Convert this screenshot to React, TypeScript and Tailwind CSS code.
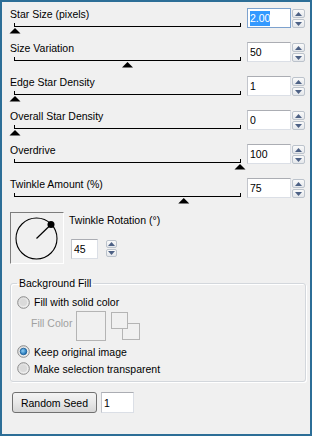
const sliders = [
  { label: 'Star Size (pixels)', value: '2.00', pos: 0, focused: true },
  { label: 'Size Variation', value: '50', pos: 0.5 },
  { label: 'Edge Star Density', value: '1', pos: 0 },
  { label: 'Overall Star Density', value: '0', pos: 0 },
  { label: 'Overdrive', value: '100', pos: 1 },
  { label: 'Twinkle Amount (%)', value: '75', pos: 0.75 },
];

function Spinner({ small }: { small?: boolean }) {
  const btn = small ? 'h-[8px]' : 'h-[9px]';
  const arrow = (up: boolean) => (
    <svg width="7" height="4" viewBox="0 0 7 4">
      <polygon points={up ? '3.5,0 7,4 0,4' : '0,0 7,0 3.5,4'} fill="#4d6185" />
    </svg>
  );
  return (
    <div className={`flex flex-col gap-[1px] ${small ? 'w-[11px]' : 'w-[13px]'}`}>
      <div className={`${btn} flex items-center justify-center rounded-[2px] border border-[#bcc3cc] bg-linear-to-b from-[#fafafa] to-[#e4e7eb]`}>
        {arrow(true)}
      </div>
      <div className={`${btn} flex items-center justify-center rounded-[2px] border border-[#bcc3cc] bg-linear-to-b from-[#fafafa] to-[#e4e7eb]`}>
        {arrow(false)}
      </div>
    </div>
  );
}

function TextBox({ value, focused, className }: { value: string; focused?: boolean; className: string }) {
  return (
    <div
      className={`flex items-center h-[20px] bg-white border pl-[2px] ${
        focused ? 'border-[#7da2ce]' : 'border-[#dbdfe6] border-t-[#abadb3] border-l-[#c2c5cc]'
      } ${className}`}
    >
      {focused ? <span className="bg-[#3399ff] text-white leading-[15px]">{value}</span> : <span>{value}</span>}
    </div>
  );
}

function Slider({ pos }: { pos: number }) {
  const cx = 5 + pos * 225;
  return (
    <svg width="232" height="11" viewBox="0 0 232 11" className="mt-[3px] block overflow-visible">
      <rect x="4" y="0" width="1" height="4" fill="#000" />
      <rect x="230" y="0" width="1" height="4" fill="#000" />
      <rect x="4" y="3" width="227" height="1" fill="#000" />
      <polygon points={`${cx},5 ${cx - 5.5},10.5 ${cx + 5.5},10.5`} fill="#000" />
    </svg>
  );
}

function Radio({ checked }: { checked?: boolean }) {
  return (
    <svg width="13" height="13" viewBox="0 0 13 13">
      <defs>
        <linearGradient id="rg" x1="0" y1="0" x2="1" y2="1">
          <stop offset="0" stopColor="#d8d8d8" />
          <stop offset="1" stopColor="#f6f6f6" />
        </linearGradient>
        <radialGradient id="rb" cx="0.4" cy="0.4" r="0.6">
          <stop offset="0" stopColor="#8fd0f7" />
          <stop offset="1" stopColor="#176bb0" />
        </radialGradient>
      </defs>
      <circle cx="6.5" cy="6.5" r="5.8" fill="url(#rg)" stroke="#8b8b8b" strokeWidth="1" />
      {checked ? (
        <circle cx="6.5" cy="6.5" r="3.3" fill="url(#rb)" stroke="#1b5d96" strokeWidth="0.8" />
      ) : (
        <circle cx="6.5" cy="6.5" r="3.6" fill="#dadada" />
      )}
    </svg>
  );
}

export default function App() {
  return (
    <div
      className="w-[312px] h-[436px] border-2 border-[#2c6e97] bg-[#f0f0f0] text-black text-[10.5px] leading-[12px] overflow-hidden"
      style={{ fontFamily: '"Liberation Sans", Arial, sans-serif' }}
    >
      <div className="pl-[8px] pt-[6px]">
        {sliders.map((s) => (
          <div key={s.label} className="flex h-[34px]">
            <div className="w-[232px] flex flex-col">
              <div className="h-[12px] whitespace-nowrap">{s.label}</div>
              <Slider pos={s.pos} />
            </div>
            <TextBox value={s.value} focused={s.focused} className="ml-[5px] w-[44px]" />
            <div className="ml-[1px] mt-[1px]">
              <Spinner />
            </div>
          </div>
        ))}

        <div className="flex">
          <div className="w-[54px] h-[52px] border border-t-[#7d7d7d] border-l-[#7d7d7d] border-r-white border-b-white">
            <svg width="52" height="50" viewBox="0 0 52 50">
              <circle cx="25.5" cy="25.5" r="20.5" fill="none" stroke="#000" strokeWidth="1.1" />
              <line x1="25.5" y1="25.5" x2="40" y2="11.5" stroke="#000" strokeWidth="1.2" />
              <circle cx="40" cy="11.5" r="3.5" fill="#000" />
            </svg>
          </div>
          <div className="ml-[5px] mt-[2px] flex flex-col">
            <div className="whitespace-nowrap">Twinkle Rotation (°)</div>
            <div className="flex mt-[13px] ml-[2px] items-start">
              <TextBox value="45" className="w-[27px]" />
              <div className="ml-[8px] mt-[1px]">
                <Spinner small />
              </div>
            </div>
          </div>
        </div>

        <fieldset className="mt-[13px] w-[296px] h-[105px] border border-[#d3d7dc] rounded-[3px] shadow-[inset_1px_1px_0_#fff,1px_1px_0_#fff] px-0 pb-0 m-0">
          <legend className="ml-[6px] px-[2px] leading-[12px]">Background Fill</legend>
          <div className="pt-[5px] pl-[6px]">
            <div className="flex items-center h-[16px] gap-[4px]">
              <Radio />
              <span>Fill with solid color</span>
            </div>
            <div className="flex items-start mt-[1px] h-[30px]">
              <span className="ml-[14px] mt-[6px] text-[#a0a0a0]">Fill Color</span>
              <div className="ml-[4px] w-[30px] h-[30px] border border-[#b4b4b4]" />
              <svg width="30" height="30" viewBox="0 0 30 30" className="ml-[5px]">
                <rect x="11.5" y="12.5" width="17" height="16" fill="#f0f0f0" stroke="#b4b4b4" />
                <rect x="0.5" y="1.5" width="16" height="16" fill="#f0f0f0" stroke="#b4b4b4" />
              </svg>
            </div>
            <div className="flex items-center h-[17px] gap-[4px] mt-[2px]">
              <Radio checked />
              <span>Keep original image</span>
            </div>
            <div className="flex items-center h-[17px] gap-[4px]">
              <Radio />
              <span>Make selection transparent</span>
            </div>
          </div>
        </fieldset>

        <div className="flex mt-[10px] ml-[2px]">
          <div className="w-[85px] h-[21px] flex items-center justify-center rounded-[3px] border border-[#707070] bg-linear-to-b from-[#f4f4f4] via-[#e8e8e8] to-[#d6d6d6]">
            Random Seed
          </div>
          <TextBox value="1" className="ml-[4px] w-[33px] h-[21px]" />
        </div>
      </div>
    </div>
  );
}
